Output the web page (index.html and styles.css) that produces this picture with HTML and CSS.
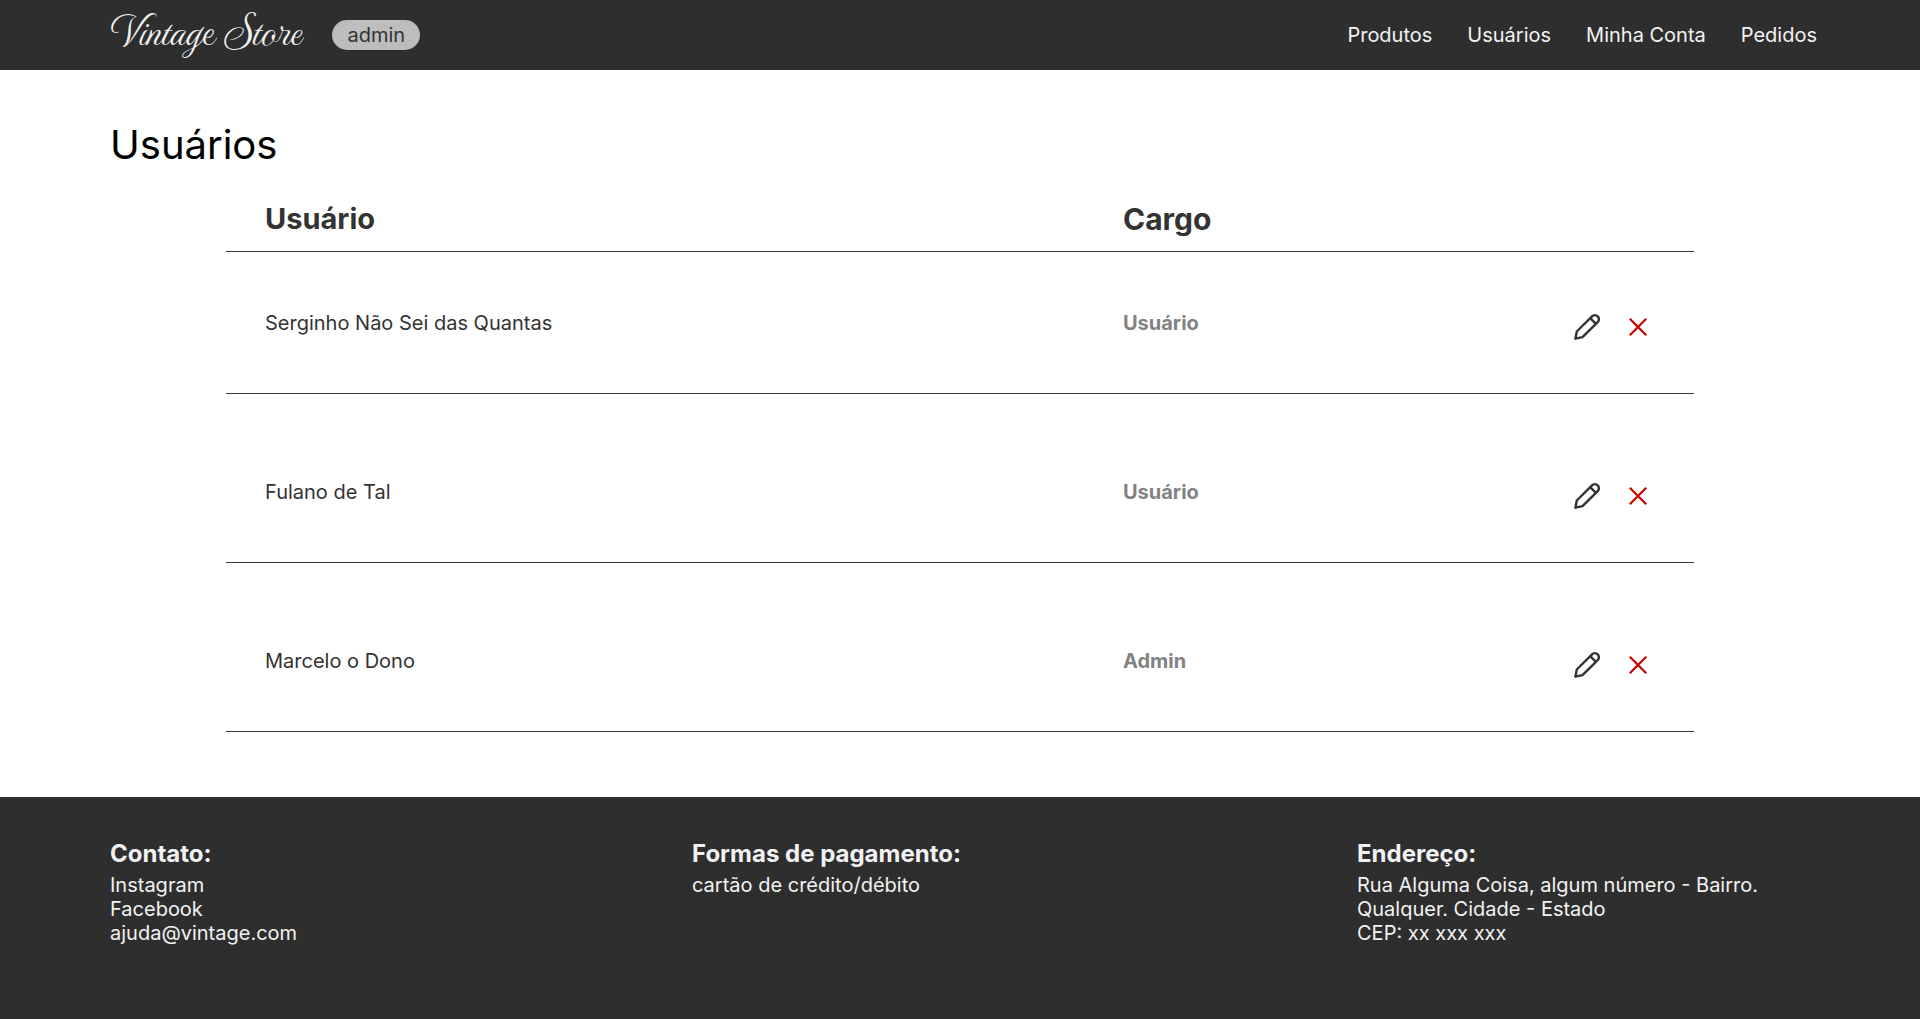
FILE: index.html
```html
<!DOCTYPE html>
<html lang="pt-BR">
<head>
  <meta charset="utf-8">
  <meta name="viewport" content="width=device-width, initial-scale=1">
  <title>Vintage Store - Usuários</title>
  <link rel="stylesheet" href="styles.css">
</head>
<body>
  <svg class="sprite" aria-hidden="true">
    <symbol id="pencil" viewBox="0 0 26 26">
      <path d="M1.4 24.7 L2.8 17.5 L18 2.4 a4 4 0 0 1 5.7 5.7 L8.5 23.2 Z M16.2 4.2 L21.9 9.9" fill="none" stroke="currentColor" stroke-width="2.4" stroke-linejoin="round"/>
    </symbol>
    <symbol id="cross" viewBox="0 0 18 18">
      <path d="M.8 .8 L17.2 17.2 M17.2 .8 L.8 17.2" fill="none" stroke="currentColor" stroke-width="2.2"/>
    </symbol>
  </svg>

  <header class="topbar">
    <div class="brand">
      <a class="logo" href="#">Vintage Store</a>
      <span class="badge">admin</span>
    </div>
    <nav class="menu">
      <a href="#">Produtos</a>
      <a href="#">Usuários</a>
      <a href="#">Minha Conta</a>
      <a href="#">Pedidos</a>
    </nav>
  </header>

  <main class="content">
    <h1 class="title">Usuários</h1>
    <table class="users">
      <thead>
        <tr><th class="col-user" scope="col">Usuário</th><th scope="col">Cargo</th><td class="col-actions"></td></tr>
      </thead>
      <tbody>
        <tr>
          <td>Serginho Não Sei das Quantas</td>
          <td class="role">Usuário</td>
          <td><div class="actions">
            <button class="edit" type="button" aria-label="Editar"><svg width="26" height="26"><use href="#pencil"/></svg></button>
            <button class="remove" type="button" aria-label="Remover"><svg width="18" height="18"><use href="#cross"/></svg></button>
          </div></td>
        </tr>
        <tr>
          <td>Fulano de Tal</td>
          <td class="role">Usuário</td>
          <td><div class="actions">
            <button class="edit" type="button" aria-label="Editar"><svg width="26" height="26"><use href="#pencil"/></svg></button>
            <button class="remove" type="button" aria-label="Remover"><svg width="18" height="18"><use href="#cross"/></svg></button>
          </div></td>
        </tr>
        <tr>
          <td>Marcelo o Dono</td>
          <td class="role">Admin</td>
          <td><div class="actions">
            <button class="edit" type="button" aria-label="Editar"><svg width="26" height="26"><use href="#pencil"/></svg></button>
            <button class="remove" type="button" aria-label="Remover"><svg width="18" height="18"><use href="#cross"/></svg></button>
          </div></td>
        </tr>
      </tbody>
    </table>
  </main>

  <footer class="footer">
    <section>
      <h2>Contato:</h2>
      <p><a href="#">Instagram</a></p>
      <p><a href="#">Facebook</a></p>
      <p><a href="#">ajuda@vintage.com</a></p>
    </section>
    <section>
      <h2>Formas de pagamento:</h2>
      <p>cartão de crédito/débito</p>
    </section>
    <section>
      <h2>Endereço:</h2>
      <p>Rua Alguma Coisa, algum número - Bairro.</p>
      <p>Qualquer. Cidade - Estado</p>
      <p>CEP: xx xxx xxx</p>
    </section>
  </footer>
</body>
</html>
```
FILE: styles.css
```css
* {
  box-sizing: border-box;
}

body {
  margin: 0;
  min-height: 100vh;
  display: flex;
  flex-direction: column;
  font-family: Inter, "Liberation Sans", sans-serif;
  font-size: 20px;
  line-height: 24px;
  font-weight: 400;
  color: #333;
  background: #fff;
}

a {
  color: inherit;
  text-decoration: none;
}

.sprite {
  display: none;
}

.topbar {
  display: flex;
  flex-wrap: wrap;
  align-items: center;
  justify-content: space-between;
  min-height: 70px;
  padding: 0 103px 0 110px;
  background: #2e2e2e;
  color: #f2f2f2;
}

.brand {
  display: flex;
  align-items: center;
  gap: 32px;
}

.logo {
  padding-bottom: 10px;
  font-family: MonteCarlo, "Great Vibes", "Liberation Serif", cursive;
  font-size: 45px;
  line-height: 60px;
}

.badge {
  padding: 3px 15px;
  border-radius: 15px;
  background: #bdbdbd;
  color: #333;
}

.menu {
  display: flex;
  flex-wrap: wrap;
  gap: 35px;
}

.content {
  flex: 1 0 auto;
  padding: 51px 110px 0;
}

.title {
  margin: 0;
  font-size: 40px;
  line-height: 48px;
  font-weight: 400;
  color: #000;
}

.users {
  width: calc(100% - 232px);
  margin: 13px 116px 64px;
  border-collapse: collapse;
  table-layout: fixed;
}

.users th,
.users td {
  padding: 0;
  text-align: left;
  border-bottom: 1px solid #333;
}

.users thead th {
  height: 69px;
  padding-top: 5px;
  font-size: 30px;
  line-height: 36px;
  font-weight: 700;
}

.users thead .col-user {
  width: 61.1%;
  font-size: 29px;
}

.col-actions {
  width: 17%;
}

.users th:first-child,
.users td:first-child {
  padding-left: 39px;
}

.users tbody td {
  height: 169px;
  padding-top: 28px;
}

.users tbody tr:first-child td {
  height: 142px;
  padding-top: 2px;
}

.users .role {
  font-weight: 700;
  color: #828282;
}

.actions {
  display: flex;
  justify-content: flex-end;
  align-items: center;
  gap: 29px;
  padding: 8px 47px 0 0;
}

.actions button {
  display: flex;
  padding: 0;
  border: 0;
  background: none;
  cursor: pointer;
}

.edit {
  color: #333;
}

.remove {
  color: #c80000;
}

.footer {
  display: grid;
  grid-template-columns: 582fr 665fr 460fr;
  min-height: 222px;
  padding: 42px 103px 60px 110px;
  background: #2e2e2e;
  color: #f2f2f2;
}

.footer h2 {
  margin: 0 0 4px;
  font-size: 24px;
  line-height: 30px;
  font-weight: 700;
}

.footer p {
  margin: 0;
}
```
